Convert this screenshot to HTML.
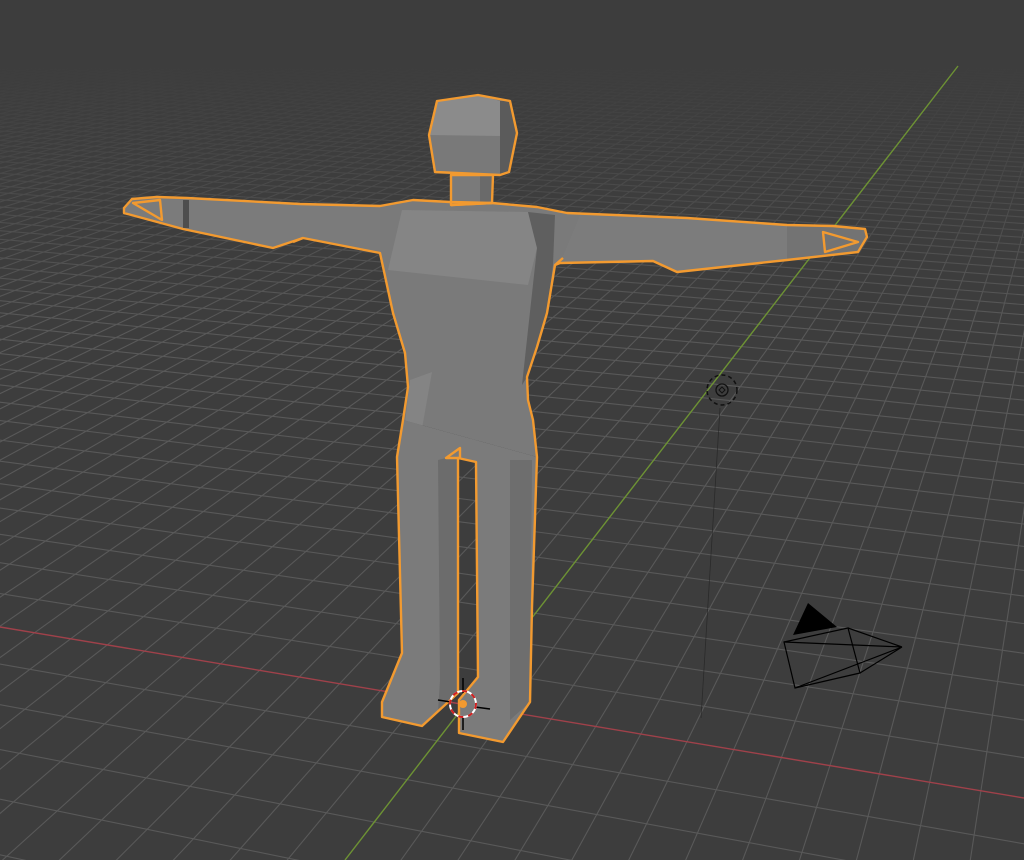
<!DOCTYPE html>
<html><head><meta charset="utf-8"><style>
html,body{margin:0;padding:0;background:#3d3d3d;overflow:hidden;width:1024px;height:860px}
svg{display:block;position:absolute;left:0;top:0}
</style></head><body>
<svg id="s" width="1024" height="860" viewBox="0 0 1024 860" xmlns="http://www.w3.org/2000/svg">
<defs>
<linearGradient id="fade" x1="0" y1="0" x2="0" y2="1">
<stop offset="0" stop-color="#3d3d3d" stop-opacity="1"/>
<stop offset="0.2" stop-color="#3d3d3d" stop-opacity="1"/>
<stop offset="1" stop-color="#3d3d3d" stop-opacity="0"/>
</linearGradient>
</defs>
<rect width="1024" height="860" fill="#3d3d3d"/>
<g id="grid" stroke="#595959" stroke-width="1.1" fill="none"></g>
<rect x="0" y="0" width="1024" height="330" fill="url(#fade)"/>
<line x1="0" y1="627" x2="1024" y2="798" stroke="#a0414a" stroke-width="1.4"/>
<line x1="345" y1="860" x2="958" y2="66" stroke="#6d9234" stroke-width="1.4"/>
<line x1="720" y1="408" x2="701" y2="718" stroke="#222" stroke-width="0.8" opacity="0.7"/>

<g stroke="none">
<polygon points="124,208 132,199 157,197 187,198 300,204 400,205 400,260 380,253 303,238 273,248 183,229 124,213" fill="#7b7b7b"/>
<polygon points="183,200 189,200 189,228 183,228" fill="#4e4e4e"/>
<polygon points="530,207 567,213 687,218 787,225 833,226 865,229 867,237 858,252 787,260 677,272 653,261 560,263 530,270" fill="#7c7c7c"/>
<polygon points="787,225 833,226 865,229 867,237 858,252 787,260" fill="#737373"/>
<polygon points="380,206 413,200 450,202 492,203 537,207 580,215 560,263 555,265 547,313 537,347 527,377 528,400 533,420 537,457 403,420 408,387 405,353 393,313 380,253" fill="#7a7a7a"/>
<polygon points="402,210 528,212 537,248 528,285 388,270" fill="#858585"/>
<polygon points="528,212 555,215 553,265 547,313 537,347 527,377 522,385 528,330 537,248" fill="#5f5f5f"/>
<polygon points="410,380 432,372 420,440 403,440" fill="#8a8a8a" opacity="0.6"/>
<polygon points="403,420 537,457 532,607 530,702 503,742 459,733 459,700 478,677 476,462 458,458 458,693 422,726 382,717 382,702 402,653 397,457" fill="#7b7b7b"/>
<polygon points="438,460 446,458 458,458 458,693 438,712 440,680" fill="#6c6c6c"/>
<polygon points="510,460 532,460 530,702 510,720" fill="#6e6e6e"/>
<polygon points="451,175 493,175 492,203 451,205" fill="#7a7a7a"/>
<polygon points="480,175 493,175 492,203 480,204" fill="#6a6a6a"/>
<polygon points="437,101 478,95 510,101 517,133 509,172 500,175 435,172 429,135" fill="#797979"/>
<polygon points="437,101 478,95 500,101 500,136 429,135" fill="#8b8b8b"/>
<polygon points="500,101 510,101 517,133 509,172 500,175" fill="#5b5b5b"/>
</g>
<g fill="none" stroke="#f29a30" stroke-width="2.4" stroke-linejoin="round">
<polygon points="437,101 478,95 510,101 517,133 509,172 500,175 435,172 429,135"/>
<polygon points="451,175 493,175 492,203 451,205"/>
<path d="M451,205 L492,203"/>
<path d="M380,253 L303,238 L273,248 L183,229 L124,213 L124,208 L132,199 L157,197 L187,198 L300,204 L380,206 L413,200 L450,202 L492,203 L537,207 L567,213 L687,218 L787,225 L833,226 L865,229 L867,237 L858,252 L787,260 L677,272 L653,261 L560,263 L555,265 L547,313 L537,347 L527,377 L528,400 L533,420 L537,457 L532,607 L530,702 L503,742 L459,733 L459,700 L478,677 L476,462 L458,458 L458,693 L422,726 L382,717 L382,702 L402,653 L397,457 L403,420 L408,387 L405,353 L393,313 Z"/>
<path d="M446,458 L460,448 L460,458 Z"/>
<path d="M133,203 L160,200 L162,220 Z"/>
<path d="M823,232 L858,242 L825,252 Z"/>
<path d="M293,242 L303,238"/>
<path d="M555,265 L563,258"/>
</g>

<g fill="none" stroke="#111">
<circle cx="722" cy="390" r="15" stroke-dasharray="4 3" stroke-width="1.5"/>
<circle cx="722" cy="390" r="6" stroke-width="1.3"/>
<polygon points="722,387 725,390 722,393 719,390" stroke-width="1"/>
</g>
<polygon points="808,603 837,627 793,635" fill="#000"/>
<g fill="none" stroke="#000" stroke-width="1.2">
<polygon points="784,642 848,628 860,673 795,688"/>
<path d="M784,642 L902,647 M848,628 L902,647 M860,673 L902,647 M795,688 L902,647"/>
</g>
<g>
<line x1="463" y1="678" x2="463" y2="693" stroke="#000" stroke-width="1.5"/>
<line x1="463" y1="716" x2="463" y2="730" stroke="#000" stroke-width="1.5"/>
<line x1="438" y1="700" x2="451" y2="702" stroke="#000" stroke-width="1.5"/>
<line x1="475" y1="707" x2="490" y2="709" stroke="#000" stroke-width="1.5"/>
<circle cx="463" cy="704" r="13" fill="none" stroke="#fff" stroke-width="2"/>
<circle cx="463" cy="704" r="13" fill="none" stroke="#d02020" stroke-width="2" stroke-dasharray="5 5"/>
<circle cx="463" cy="704" r="4" fill="#f29a30"/>
</g>
</svg>
<script>
(function(){
var VX=[-4639,-150],VY=[1125,-150],O=[464,705];
var a=-0.00836,b=0.0401;
var out=[];var N=160;
function seg(p,q){
 var pts=[];
 for(var i=0;i<=400;i++){
  var t=i/400;var u=p[0]+(q[0]-p[0])*t,v=p[1]+(q[1]-p[1])*t;
  var w=a*u+b*v+1;
  if(w>0.03){
   var x=(a*u*VX[0]+b*v*VY[0]+O[0])/w,y=(a*u*VX[1]+b*v*VY[1]+O[1])/w;
   pts.push([x,y]);
  }
 }
 if(pts.length<2)return;
 var s=pts[0],e=pts[pts.length-1];
 out.push('<line x1="'+s[0].toFixed(1)+'" y1="'+s[1].toFixed(1)+'" x2="'+e[0].toFixed(1)+'" y2="'+e[1].toFixed(1)+'"/>');
}
for(var k=-N;k<=N;k++){
 if(k===0)continue;
 seg([-N*3,k],[N*3,k]);
 seg([k,-N*3],[k,N*3]);
}
document.getElementById('grid').innerHTML=out.join('');
})();
</script>
</body></html>
